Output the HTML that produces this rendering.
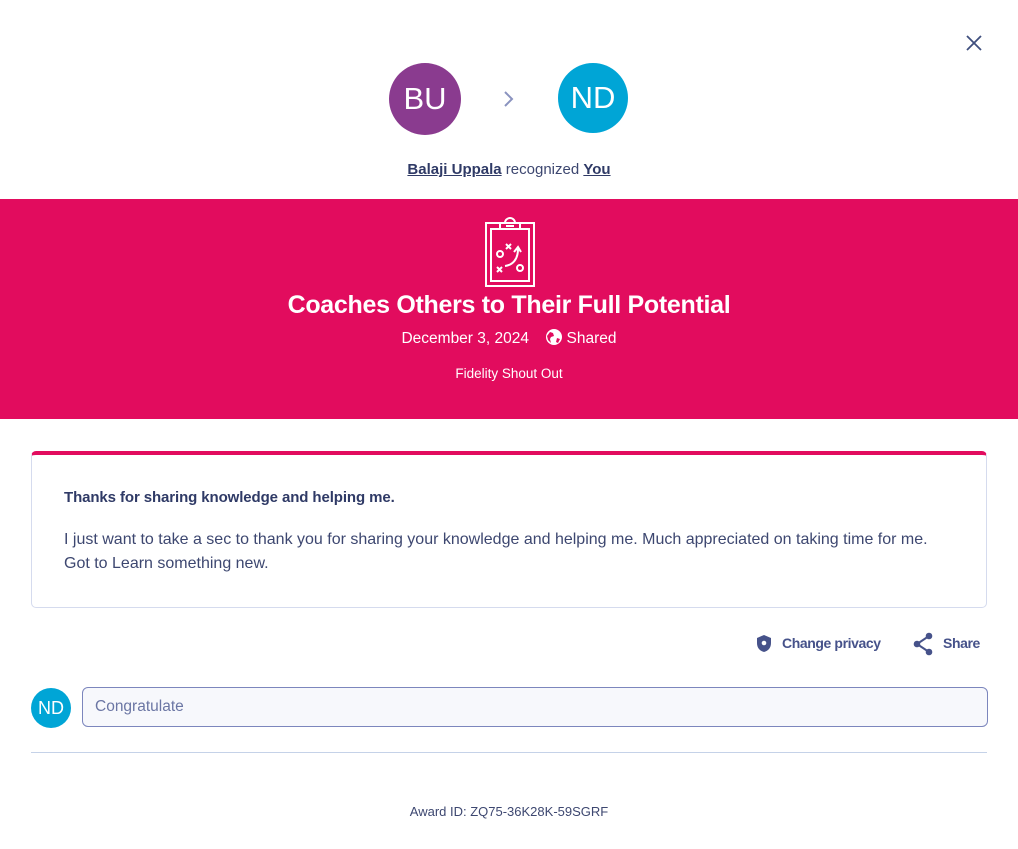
<!DOCTYPE html>
<html><head><meta charset="utf-8"><style>
*{margin:0;padding:0;box-sizing:border-box}
body{width:1018px;height:849px;background:#fff;font-family:"Liberation Sans",sans-serif;color:#2f3a66;position:relative;overflow:hidden}
.a{position:absolute}
.circ{border-radius:50%;color:#fff;display:flex;align-items:center;justify-content:center;font-weight:400}
.c{text-align:center;left:0;width:1018px}
</style></head><body>
<svg class="a" style="left:964px;top:33px" width="20" height="20" viewBox="0 0 20 20"><path d="M3 3L17 17M17 3L3 17" stroke="#3f4f7e" stroke-width="1.8"/></svg>
<div class="a circ" style="left:389px;top:63px;width:72px;height:72px;background:#8a3b8f;font-size:31px">BU</div>
<svg class="a" style="left:502px;top:90px" width="14" height="18" viewBox="0 0 14 18"><path d="M3 2L10 9L3 16" stroke="#8a93bf" stroke-width="2" fill="none"/></svg>
<div class="a circ" style="left:558px;top:63px;width:70px;height:70px;background:#00a5d6;font-size:31px">ND</div>
<div class="a c" style="top:161px;font-size:15px;color:#3d4770"><b style="text-decoration:underline;color:#2f3a66">Balaji Uppala</b> recognized <b style="text-decoration:underline;color:#2f3a66">You</b></div>
<div class="a" style="left:0;top:199px;width:1018px;height:220px;background:#e20c5e"></div>
<svg class="a" style="left:484px;top:213px" width="52" height="75" viewBox="0 0 52 75" fill="none" stroke="#fff" stroke-width="2">
<rect x="2" y="10" width="48" height="63"/><rect x="7" y="16" width="38" height="52"/>
<path d="M16 16V10h5a5 5 0 0 1 10 0h5v6z"/><path d="M22 13h8"/>
<path d="M22 31l5 5M27 31l-5 5M13 54l5 5M18 54l-5 5"/><circle cx="16" cy="41" r="3"/><circle cx="36" cy="55" r="3"/>
<path d="M21 53c8-1 13-7 13-17M30 39l4-5 3 5"/></svg>
<div class="a c" style="top:291px;font-size:25px;font-weight:bold;color:#fff;letter-spacing:-0.3px">Coaches Others to Their Full Potential</div>
<div class="a c" style="top:329px;font-size:15.5px;color:#fff">December 3, 2024 &nbsp;&nbsp; <svg width="16" height="16" viewBox="0 0 16 16" style="vertical-align:-2px"><circle cx="8" cy="8" r="8" fill="#fff"/><path d="M4 3l3 1 1 3-3 1-1 2 1 4-3-3-1-4zM11 9l3 1-2 4-2-1z" fill="#e20c5e"/></svg> Shared</div>
<div class="a c" style="top:366px;font-size:13.5px;color:#fff">Fidelity Shout Out</div>
<div class="a" style="left:31px;top:451px;width:956px;height:157px;border:1px solid #d5dbee;border-top:4px solid #e20c5e;border-radius:5px"></div>
<div class="a" style="left:64px;top:489px;font-size:15px;font-weight:bold;letter-spacing:-0.1px;color:#2f3a66">Thanks for sharing knowledge and helping me.</div>
<div class="a" style="left:64px;top:528px;font-size:16px;line-height:24px;color:#3d4770">I just want to take a sec to thank you for sharing your knowledge and helping me. Much appreciated on taking time for me.<br>Got to Learn something new.</div>
<svg class="a" style="left:755px;top:634px" width="18" height="19" viewBox="0 0 18 19"><path d="M9 1L16 4v5c0 5-3 8-7 9-4-1-7-4-7-9V4z" fill="#46528a"/><circle cx="9" cy="9" r="2.3" fill="#fff"/></svg>
<div class="a" style="left:782px;top:635px;font-size:14px;font-weight:bold;color:#46528a;letter-spacing:-0.4px">Change privacy</div>
<svg class="a" style="left:912px;top:632px" width="22" height="24" viewBox="0 0 22 24"><path d="M17 4L5 12l12 8" stroke="#46528a" stroke-width="2" fill="none"/><circle cx="17" cy="4" r="3.3" fill="#46528a"/><circle cx="5" cy="12" r="3.3" fill="#46528a"/><circle cx="17" cy="20" r="3.3" fill="#46528a"/></svg>
<div class="a" style="left:943px;top:635px;font-size:14px;font-weight:bold;color:#46528a;letter-spacing:-0.4px">Share</div>
<div class="a circ" style="left:31px;top:688px;width:40px;height:40px;background:#00a5d6;font-size:18px">ND</div>
<div class="a" style="left:82px;top:687px;width:906px;height:40px;border:1px solid #7c86bd;border-radius:6px;background:#f7f8fc;padding:10px 12px;font-size:15.5px;color:#6b76a4">Congratulate</div>
<div class="a" style="left:31px;top:752px;width:956px;height:1px;background:#c5d2e8"></div>
<div class="a c" style="top:804px;font-size:13px;color:#3d4770">Award ID: ZQ75-36K28K-59SGRF</div>
</body></html>
